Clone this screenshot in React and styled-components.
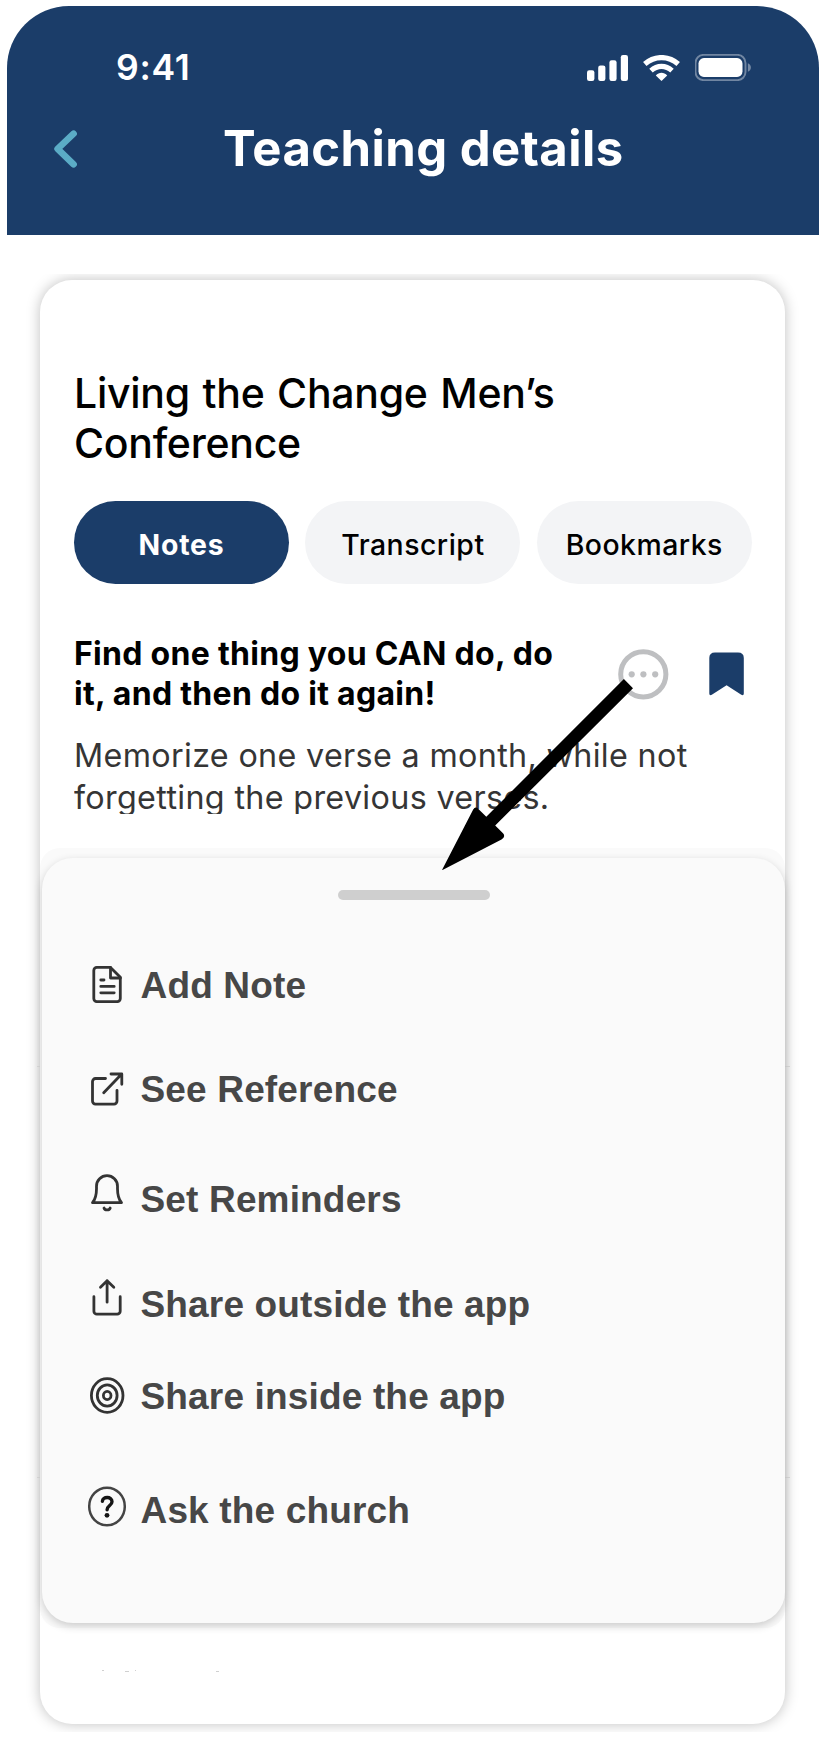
import React from "react";
import styled, { createGlobalStyle } from "styled-components";

const navy = "#1b3d69";

const GlobalStyle = createGlobalStyle`
  body { margin: 0; background: #fff; font-family: Inter, "Liberation Sans", sans-serif; }
  * { box-sizing: border-box; }
  h1, h2, h3, p, ul { margin: 0; padding: 0; }
`;

const Phone = styled.main`
  position: relative;
  width: 826px;
  height: 1760px;
  padding: 6px 7px 0;
  overflow: hidden;
`;

const Header = styled.header`
  height: 229px;
  padding-top: 39px;
  background: ${navy};
  border-radius: 62px 62px 0 0;
  color: #fff;
`;

const StatusBar = styled.div`
  display: flex;
  align-items: center;
  justify-content: space-between;
  height: 45px;
  padding: 0 67px 0 109px;
`;

const Time = styled.span`
  font-size: 35.5px;
  font-weight: 600;
  line-height: 45px;
  letter-spacing: 0.7px;
`;

const StatusIcons = styled.div`
  display: flex;
  align-items: center;
  gap: 15px;
`;

const TitleBar = styled.div`
  display: flex;
  align-items: center;
  height: 60px;
  margin-top: 29px;
  padding-left: 45px;
`;

const BackButton = styled.button`
  display: flex;
  width: 28px;
  height: 42px;
  padding: 0;
  border: 0;
  background: none;
`;

const ScreenTitle = styled.h1`
  margin-left: 143px;
  font-size: 49px;
  font-weight: 700;
  line-height: 60px;
  letter-spacing: 0.45px;
  white-space: nowrap;
`;

const ScrollArea = styled.section`
  height: 1458px;
  margin-top: 39px;
  padding: 6px 34px 0 33px;
  overflow: hidden;
`;

const Card = styled.article`
  position: relative;
  height: 1444px;
  padding: 87.5px 33px 0 34px;
  border-radius: 32px;
  background: #fff;
  box-shadow: 0 0 14px rgba(0, 0, 0, 0.25);
`;

const TeachingTitle = styled.h2`
  font-size: 41px;
  font-weight: 500;
  line-height: 50px;
  letter-spacing: -0.27px;
  word-spacing: 2px;
  color: #000;
`;

const Tabs = styled.nav`
  display: flex;
  gap: 16.4px;
  margin-top: 33.5px;
`;

const Tab = styled.button`
  flex: 0 0 215px;
  height: 83px;
  padding: 4px 0 0;
  border: 0;
  border-radius: 42px;
  background: ${(p) => (p.$active ? navy : "#f3f4f6")};
  color: ${(p) => (p.$active ? "#fff" : "#000")};
  font-family: inherit;
  font-size: 28.4px;
  font-weight: ${(p) => (p.$active ? 700 : 500)};
  letter-spacing: ${(p) => (p.$active ? 0.8 : 0.5)}px;
`;

const NoteHead = styled.div`
  display: flex;
  align-items: flex-start;
  margin-top: 49.5px;
`;

const NoteTitle = styled.h3`
  flex: 1;
  font-size: 32px;
  font-weight: 650;
  line-height: 40px;
  letter-spacing: 0.29px;
  white-space: nowrap;
  color: #000;
`;

const NoteActions = styled.div`
  display: flex;
  align-items: flex-start;
  gap: 40px;
  padding: 15px 8px 0 0;
`;

const BookmarkIcon = styled.svg`
  margin-top: 3px;
`;

const NoteBody = styled.p`
  height: 78.5px;
  margin-top: 21.5px;
  overflow: hidden;
  font-size: 32.3px;
  line-height: 42px;
  letter-spacing: 0.33px;
  white-space: nowrap;
  color: #353535;
`;

const Divider = styled.hr`
  height: 1px;
  margin: ${(p) => p.$top}px -38px 0 -37px;
  border: 0;
  background: #d8d8d8;
`;

const ClippedLine = styled.svg`
  display: block;
  margin: 192px 0 0 27px;
`;

const SheetBackdrop = styled.div`
  position: absolute;
  top: 568px;
  left: 0;
  right: 0;
  height: 780px;
  padding: 10px 0 5px 2px;
  border-radius: 20px;
  background: #fafafa;
`;

const Sheet = styled.section`
  height: 765px;
  padding: 32px 0 0 45px;
  border-radius: 31px;
  background: #fafafa;
  box-shadow: 0 3px 9px rgba(0, 0, 0, 0.19);
`;

const Handle = styled.div`
  width: 152px;
  height: 10px;
  margin-left: 250.5px;
  border-radius: 5px;
  background: #cfcfcf;
`;

const Menu = styled.ul`
  margin-top: 65px;
  list-style: none;
`;

const MenuItem = styled.li`
  display: flex;
  align-items: center;
  gap: 13.5px;
  height: 42px;
  margin-top: ${(p) => p.$gap}px;
  font-family: "Liberation Sans", sans-serif;
  font-size: 37px;
  font-weight: 700;
  line-height: 42px;
  letter-spacing: 0.16px;
  color: #474747;
`;

const MenuIcon = styled.svg`
  flex: none;
  overflow: visible;
  fill: none;
  stroke: #333;
  stroke-width: 2.8;
  stroke-linecap: round;
  stroke-linejoin: round;
  transform: translateY(${(p) => -p.$lift}px);
`;

const Pointer = styled.svg`
  position: absolute;
  top: 670px;
  left: 430px;
`;

const menu = [
  {
    label: "Add Note", gap: 0, lift: 1.5,
    icon: (
      <>
        <path d="M23.5 3.9H9.8a3 3 0 0 0-3 3V35.1a3 3 0 0 0 3 3H30.3a3 3 0 0 0 3-3V13.8Z" />
        <path d="M23.5 3.9V14.5H33.4M13.8 16.5H17M13.8 22.9H27.2M13.8 29.3H27.2" />
      </>
    ),
  },
  {
    label: "See Reference", gap: 62, lift: 1.2,
    icon: (
      <>
        <path d="M18.5 10.7H8.5a3 3 0 0 0-3 3V33.3a3 3 0 0 0 3 3H27a3 3 0 0 0 3-3V22.5" />
        <path d="M16.7 25L34.7 6.2M24 6.2H34.8V16.5" />
      </>
    ),
  },
  {
    label: "Set Reminders", gap: 68, lift: 7.3,
    icon: (
      <>
        <path d="M5.5 31C8 28 9.5 23 9.5 17V14.5a10.5 10.5 0 0 1 21 0V17C30.5 23 32 28 34.5 31Z" />
        <path d="M17 36.3C17.8 38.8 22.4 38.8 23.2 36.3" />
      </>
    ),
  },
  {
    label: "Share outside the app", gap: 63, lift: 7.8,
    icon: (
      <>
        <path d="M6.9 20.5V35a3 3 0 0 0 3 3H30.2a3 3 0 0 0 3-3V20.5" />
        <path d="M20.1 26V4.5M13.5 11L20.1 4.5L26.8 11" />
      </>
    ),
  },
  {
    label: "Share inside the app", gap: 50, lift: 1.5,
    icon: (
      <>
        <ellipse cx="20.2" cy="21" rx="15.8" ry="16.8" />
        <ellipse cx="20.2" cy="21" rx="9.9" ry="10.6" />
        <ellipse cx="20.2" cy="21" rx="3.8" ry="4.1" />
      </>
    ),
  },
  {
    label: "Ask the church", gap: 72, lift: 4.5,
    icon: (
      <>
        <ellipse cx="20" cy="21" rx="17.8" ry="18.8" strokeWidth="2.5" stroke="#444" />
        <path d="M15.4 15.8C15.6 10.8 25 10.7 25 16.2C25 20 20.1 20 20.1 24.2" stroke="#151515" strokeWidth="3.4" />
        <circle cx="20" cy="29.8" r="2.4" fill="#151515" stroke="none" />
      </>
    ),
  },
];

function StatusGlyphs() {
  return (
    <StatusIcons>
      <svg width="41" height="26" fill="#fff">
        <rect x="0" y="15.2" width="7.4" height="10.8" rx="2.2" />
        <rect x="11.2" y="10.5" width="7.2" height="15.5" rx="2.2" />
        <rect x="22.4" y="5.2" width="7.2" height="20.8" rx="2.2" />
        <rect x="33.8" y="0" width="7.2" height="26" rx="2.2" />
      </svg>
      <svg width="37" height="26" viewBox="0 0 37 26" fill="none" stroke="#fff" strokeWidth="5.2">
        <path d="M1.8 9C11.5 .4 25.5 .4 35.2 9" />
        <path d="M8 15.6C14.3 10 22.7 10 29 15.6" />
        <path d="M12.8 20.4C16 17 21 17 24.2 20.4L18.5 26Z" fill="#fff" stroke="none" />
      </svg>
      <svg width="57" height="27" viewBox=".5 .5 57 27">
        <rect x="1" y="1.4" width="50" height="25.2" rx="8" fill="none" stroke="#fff" strokeOpacity=".38" strokeWidth="1.9" />
        <rect x="4" y="4.6" width="44" height="18.8" rx="5.4" fill="#fff" />
        <path d="M53.4 9.8C57.4 11.2 57.4 16.8 53.4 18.2Z" fill="#fff" fillOpacity=".4" />
      </svg>
    </StatusIcons>
  );
}

export default function App() {
  return (
    <>
      <GlobalStyle />
      <Phone>
        <Header>
          <StatusBar>
            <Time>9:41</Time>
            <StatusGlyphs />
          </StatusBar>
          <TitleBar>
            <BackButton aria-label="Back">
              <svg width="28" height="42" fill="none" stroke="#5bacc6" strokeWidth="6.6" strokeLinecap="round" strokeLinejoin="round">
                <path d="M21.6 5.7L5.6 20.8L21.6 36.3" />
              </svg>
            </BackButton>
            <ScreenTitle>Teaching details</ScreenTitle>
          </TitleBar>
        </Header>

        <ScrollArea>
          <Card>
            <TeachingTitle>Living the Change Men’s<br />Conference</TeachingTitle>
            <Tabs>
              <Tab $active>Notes</Tab>
              <Tab>Transcript</Tab>
              <Tab>Bookmarks</Tab>
            </Tabs>
            <NoteHead>
              <NoteTitle>Find one thing you CAN do, do<br />it, and then do it again!</NoteTitle>
              <NoteActions>
                <svg width="51" height="51" fill="#bebfc1">
                  <circle cx="25.3" cy="25.3" r="22.6" fill="none" stroke="#bebfc1" strokeWidth="5" />
                  <circle cx="13.7" cy="25.3" r="3.1" />
                  <circle cx="25.4" cy="25.3" r="3.1" />
                  <circle cx="37.2" cy="25.3" r="3.1" />
                </svg>
                <BookmarkIcon width="35" height="44" fill={navy}>
                  <path d="M6 .5H29Q34.8 .5 34.8 6V41.5Q34.8 44 32.3 42.8L17.6 33.3L2.8 42.8Q.3 44 .3 41.5V6Q.3 .5 6 .5Z" />
                </BookmarkIcon>
              </NoteActions>
            </NoteHead>
            <NoteBody>Memorize one verse a month, while not<br />forgetting the previous verses.</NoteBody>
            <Divider $top={252} />
            <Divider $top={410} />
            <ClippedLine width="120" height="2" fill="#d0d0d0">
              <rect x="1" width="2" height="1" />
              <rect x="24" y="1" width="4" height="1" />
              <rect x="34" width="1" height="1" />
              <rect x="115" y="1" width="3" height="1" />
            </ClippedLine>

            <SheetBackdrop>
              <Sheet>
                <Handle />
                <Menu>
                  {menu.map((item) => (
                    <MenuItem key={item.label} $gap={item.gap}>
                      <MenuIcon width="40" height="42" $lift={item.lift}>{item.icon}</MenuIcon>
                      {item.label}
                    </MenuItem>
                  ))}
                </Menu>
              </Sheet>
            </SheetBackdrop>
          </Card>
        </ScrollArea>

        <Pointer width="210" height="205" viewBox="430 670 210 205">
          <path d="M442 870L473.2 809.5Q475.3 806 478.4 808.9L486.3 816.7L623.9 679L633 688.2L495.2 825.5L503 833.3Q506 836.8 501.5 839.6L443 869.8Z" />
        </Pointer>
      </Phone>
    </>
  );
}
